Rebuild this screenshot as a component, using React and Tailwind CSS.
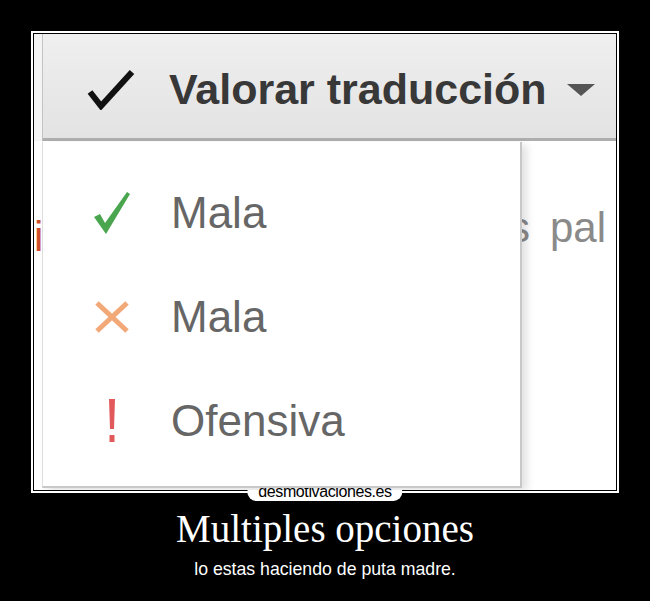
import React from 'react';

const sans = { fontFamily: '"Liberation Sans", Arial, sans-serif' };
const serif = { fontFamily: '"Liberation Serif", "Times New Roman", serif' };

const BlackCheck = () => (
  <svg width="48" height="42" viewBox="0 0 48 42" className="shrink-0">
    <path d="M3 24 L14 38 L45 4" fill="none" stroke="#111" strokeWidth="6" strokeLinejoin="miter" />
  </svg>
);

const GreenCheck = () => (
  <svg width="40" height="48" viewBox="0 0 40 48">
    <path d="M2 28 L8 25 L13 34 L35 3 L38 5 L14 45 Z" fill="#4aa64e" />
  </svg>
);

const OrangeX = () => (
  <svg width="36" height="34" viewBox="0 0 36 34">
    <path d="M3 3 L33 31 M33 3 L3 31" fill="none" stroke="#f3a878" strokeWidth="5" />
  </svg>
);

const RedBang = () => (
  <svg width="14" height="44" viewBox="0 0 14 44">
    <path d="M4 0 H10 L9 30 H5 Z" fill="#e2595b" />
    <rect x="4.5" y="36" width="5" height="7" fill="#e2595b" />
  </svg>
);

const MenuItem = ({ icon, label }) => (
  <div className="flex items-center h-[104px]">
    <div className="w-[40px] flex justify-center">{icon}</div>
    <span className="ml-[39px] text-[44px] text-[#666]" style={sans}>
      {label}
    </span>
  </div>
);

export default function App() {
  return (
    <div className="w-[650px] h-[601px] bg-black flex flex-col items-center pt-[31px]">
      <div className="relative w-[588px] h-[462px] border-2 border-white p-px bg-black">
        <div className="relative w-full h-full bg-white overflow-hidden">
          {/* page text behind the menu */}
          <span className="absolute left-[0px] top-[182px] text-[42px] leading-none text-[#d0502e]" style={sans}>
            i
          </span>
          <span className="absolute left-[475px] top-[173px] text-[42px] leading-none text-[#8a8a8a]" style={sans}>
            s
          </span>
          <span className="absolute left-[516px] top-[173px] text-[42px] leading-none text-[#8a8a8a]" style={sans}>
            pal
          </span>

          {/* button bar */}
          <div className="flex h-[107px]">
            <div className="w-[8px] bg-[#f4f4f4]" />
            <div className="flex-1 flex items-center pt-[6px] pl-[44px] bg-gradient-to-b from-[#efefef] to-[#e3e3e3] border-l border-[#c4c4c4] border-b-[3px] border-b-[#aeaeae]">
              <BlackCheck />
              <span className="ml-[34px] text-[43px] font-bold text-[#383838] whitespace-nowrap" style={sans}>
                Valorar traducción
              </span>
              <svg width="28" height="12" viewBox="0 0 28 12" className="ml-[20px] mt-[2px] shrink-0">
                <path d="M0 0 H28 L14 12 Z" fill="#555" />
              </svg>
            </div>
          </div>

          {/* dropdown */}
          <div className="relative z-10 ml-[8px] mt-px w-[480px] h-[346px] bg-white border-l border-[#dedede] border-r-2 border-r-[#c8c8c8] border-b-2 border-b-[#c8c8c8] shadow-[5px_3px_8px_rgba(0,0,0,0.12)] pt-[19px] pl-[49px]">
            <MenuItem icon={<GreenCheck />} label="Mala" />
            <MenuItem icon={<OrangeX />} label="Mala" />
            <MenuItem icon={<RedBang />} label="Ofensiva" />
          </div>
        </div>

        <div className="absolute left-1/2 -translate-x-1/2 bottom-[-10px] h-[18px] px-[11px] bg-white rounded-full flex items-center">
          <span className="text-[16px] leading-none tracking-[-0.4px] text-black" style={sans}>
            desmotivaciones.es
          </span>
        </div>
      </div>

      <h1 className="mt-[13px] text-[39px] leading-[45px] text-white" style={serif}>
        Multiples opciones
      </h1>
      <p className="mt-[8px] text-[17.7px] leading-[20px] text-white" style={sans}>
        lo estas haciendo de puta madre.
      </p>
    </div>
  );
}
